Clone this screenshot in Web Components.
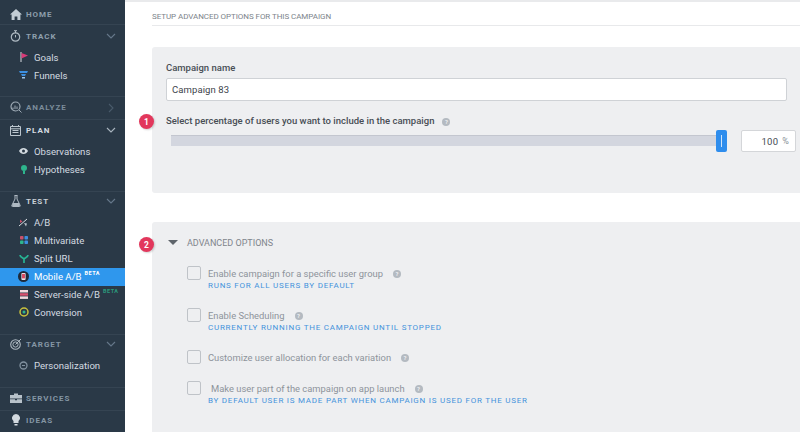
<!DOCTYPE html>
<html><head><meta charset="utf-8"><style>
html,body{margin:0;padding:0;height:432px;overflow:hidden;background:#fff;font-family:Roboto,"Liberation Sans",sans-serif}
app-shell{width:800px;height:432px}
</style></head><body>
<template id="t-shell"><style>
:host{display:flex;height:432px;overflow:hidden}
aside{width:125px;flex:none;background:#2a3947;display:flex;flex-direction:column;overflow:hidden;box-sizing:border-box;padding-top:3px}
main{flex:1;min-width:0;display:flex;flex-direction:column;padding:0 0 0 27px;border-top:2px solid #e9eaec}
</style><aside><slot name="nav"></slot></aside><main><slot></slot></main></template>

<template id="t-section"><style>
:host{display:flex;flex-direction:column;border-bottom:1px solid #354452;box-sizing:border-box;height:var(--h);flex:none}
:host([last]){border-bottom:0}
.head{display:flex;align-items:center;box-sizing:border-box;height:var(--hh,22px);padding-bottom:var(--pb,0);margin-bottom:var(--mb,0);flex:none;padding-left:9px;font-size:8px;font-weight:700;letter-spacing:.95px;color:var(--c,#8fa0ae);position:relative}
.ic{width:13px;height:13px;margin-right:4px;display:flex;align-items:center;justify-content:center;flex:none}
.chev{position:absolute;left:106px;top:calc(var(--hh,22px) / 2 - 4px - var(--pb,0px) / 2);width:12px;height:10px}
</style><div class="head"><span class="ic"><slot name="icon"></slot></span><span><slot name="title"></slot></span><span class="chev"><slot name="chev"></slot></span></div><slot></slot></template>

<template id="t-item"><style>
:host{display:flex;align-items:center;box-sizing:border-box;height:18px;padding:0 0 2px 18px;font-size:9.6px;color:#d4dbe1;white-space:nowrap;flex:none}
:host([active]){background:#2f97ed;color:#fff}
.ic{width:11px;height:12px;margin-right:5px;display:flex;align-items:center;justify-content:center;flex:none}
</style><span class="ic"><slot name="icon"></slot></span><slot></slot></template>

<template id="t-card"><style>
:host{display:block;background:#eeeff1;border-radius:3px 0 0 3px;position:relative;box-sizing:border-box;flex:none}
</style><slot></slot></template>

<template id="t-badge"><style>
:host{position:absolute;left:-13px;width:15px;height:15px;border-radius:50%;background:#e2375c;color:#fff;font-size:8.5px;font-weight:700;display:flex;align-items:center;justify-content:center;box-shadow:1px 1px 2px rgba(0,0,0,.18)}
</style><slot></slot></template>

<template id="t-help"><style>
:host{display:inline-flex;width:8px;height:8px;border-radius:50%;background:#b4bac1;color:#eeeff1;font-size:6px;font-weight:700;align-items:center;justify-content:center;line-height:1}
</style>?</template>

<template id="t-check"><style>
:host{display:block;position:relative;height:var(--rh);padding-left:56px;box-sizing:border-box;flex:none}
.box{position:absolute;left:35px;top:0;width:12px;height:12px;border:1px solid #bfc3c8;border-radius:2px;background:#eeeff1}
.row{display:flex;align-items:center;height:15px;font-size:9.4px;color:#8d939b;white-space:nowrap}
.sub{font-size:8px;letter-spacing:.76px;color:#4593dc;height:11px;line-height:11px;white-space:nowrap;margin-top:-1px}
::slotted([slot=label]){margin-right:10px}
</style><span class="box"></span><div class="row"><slot name="label"></slot><slot name="help"></slot></div><div class="sub"><slot name="sub"></slot></div></template>

<template id="t-slider"><style>
:host{display:block;position:relative;height:22px;margin-top:3px}
.track{position:absolute;left:5px;top:5px;width:546px;height:11px;background:#d3d6df;border-top:1px solid #c3c6cf;box-sizing:border-box}
.thumb{position:absolute;left:550px;top:0;width:11px;height:22px;background:#2e8ded;border-radius:2px;display:flex;justify-content:center;align-items:center}
.thumb i{width:1px;height:12px;background:#cfe4fa;display:block}
.val{position:absolute;left:575px;top:0;width:55px;height:22px;border:1px solid #d4d6d9;border-radius:2px;background:#fff;box-sizing:border-box;display:flex;align-items:center;justify-content:flex-end;padding-right:6px;font-size:9.5px;letter-spacing:.2px;color:#444b52}
.val span{color:#888f96;margin-left:4px;font-size:9px}
</style><div class="track"></div><div class="thumb"><i></i></div><div class="val">100<span>%</span></div></template>

<app-shell>
 <div slot="nav" style="display:contents">
 <nav-section style="--h:22px;--c:#8d9dab"><svg slot="icon" width="12" height="11" viewBox="0 0 12 11"><path d="M6 0 0 5.500h1.600V11h3V7.500h2.800V11h3V5.500H12z" fill="#c2ccd4"/></svg><span slot="title">HOME</span></nav-section>
 <nav-section style="--h:72px;--mb:2px"><svg slot="icon" width="11" height="12" viewBox="0 0 11 12"><circle cx="5.500" cy="7" r="4.200" fill="none" stroke="#aeb9c2" stroke-width="1.200"/><path d="M4 .7h3M5.500 1v2M5.500 5v2.400" stroke="#aeb9c2" fill="none"/></svg><span slot="title">TRACK</span><svg slot="chev" width="10" height="6" viewBox="0 0 10 6"><path d="M1 1l4 4 4-4" fill="none" stroke="#66788a" stroke-width="1.100"/></svg>
  <nav-item><svg slot="icon" width="8" height="10" viewBox="0 0 8 10"><path d="M1 0v10" stroke="#d8dde2" stroke-width="1"/><path d="M1.500 1 8 3.500 1.500 6.500z" fill="#d93a78"/></svg>Goals</nav-item>
  <nav-item><svg slot="icon" width="9" height="8" viewBox="0 0 9 8"><path d="M0 0h9L8 2H1z" fill="#3c8fe0"/><path d="M2 3h5L6 5H3z" fill="#3c8fe0"/><path d="M3 6h3v1.500H3z" fill="#9cc7ee"/></svg>Funnels</nav-item>
 </nav-section>
 <nav-section style="--h:23px;--c:#7b8c9a;--pb:2px"><svg slot="icon" width="12" height="12" viewBox="0 0 12 12"><circle cx="5.500" cy="5.500" r="4.500" fill="none" stroke="#9eabb6" stroke-width="1.200"/><path d="M3 6.500v1.500M5 4.500v3.500M7 5.500v2.500M9 9l2.500 2.500" stroke="#9eabb6"/></svg><span slot="title">ANALYZE</span><svg slot="chev" width="10" height="10" viewBox="0 0 10 10"><path d="M3 1l4 4-4 4" fill="none" stroke="#4a5b6b" stroke-width="1.100"/></svg></nav-section>
 <nav-section style="--h:72px;--c:#d5dce2;--mb:1px;--pb:2px"><svg slot="icon" width="11" height="11" viewBox="0 0 11 11"><path d="M.5 1.500h10v9H.5zM.5 3.800h10M2.500 0v2M8.500 0v2M2.500 5.500h6M2.500 7.500h6" fill="none" stroke="#bcc6ce" stroke-width="1"/></svg><span slot="title">PLAN</span><svg slot="chev" width="10" height="6" viewBox="0 0 10 6"><path d="M1 1l4 4 4-4" fill="none" stroke="#a9b5bf" stroke-width="1.100"/></svg>
  <nav-item><svg slot="icon" width="9" height="6" viewBox="0 0 9 6"><path d="M0 3c2-4 7-4 9 0-2 4-7 4-9 0z" fill="#d4dbe1"/><circle cx="4.500" cy="3" r="1.500" fill="#2a3846"/></svg>Observations</nav-item>
  <nav-item><svg slot="icon" width="6" height="9" viewBox="0 0 6 9"><circle cx="3" cy="3" r="3" fill="#2eb58d"/><path d="M2 6h2v3H2z" fill="#2eb58d"/></svg>Hypotheses</nav-item>
 </nav-section>
 <nav-section style="--h:143px;--c:#c8d0d7;--hh:20px;--mb:2px;--pb:2px"><svg slot="icon" width="10" height="12" viewBox="0 0 10 12"><path d="M3.500 .5h3M4 .5v3.500L.8 10.500c-.3.600 0 1 .6 1h7.200c.6 0 .9-.4.600-1L6 4V.5" fill="none" stroke="#aeb9c2"/><path d="M2 8h6l1 3H1z" fill="#aeb9c2"/></svg><span slot="title">TEST</span><svg slot="chev" width="10" height="6" viewBox="0 0 10 6"><path d="M1 1l4 4 4-4" fill="none" stroke="#66788a" stroke-width="1.100"/></svg>
  <nav-item><svg slot="icon" width="9" height="9" viewBox="0 0 9 9"><path d="M0 8 8 1" stroke="#d8dde2"/><path d="M1 1.500l2.500 2L1 5z" fill="#c9516b"/><path d="M5 5l3 .5-1 3z" fill="#b9c2ca"/></svg>A/B</nav-item>
  <nav-item><svg slot="icon" width="8" height="8" viewBox="0 0 8 8"><rect width="3.500" height="3.500" rx=".8" fill="#c9516b"/><rect x="4.500" width="3.500" height="3.500" rx=".8" fill="#3c8fe0"/><rect y="4.500" width="3.500" height="3.500" rx=".8" fill="#2eb58d"/><rect x="4.500" y="4.500" width="3.500" height="3.500" rx=".8" fill="#3c8fe0"/></svg>Multivariate</nav-item>
  <nav-item><svg slot="icon" width="10" height="9" viewBox="0 0 10 9"><path d="M1 1c0 2 3 3 4 4 1-1 4-2 4-4M5 5v4" fill="none" stroke="#27b393" stroke-width="1.700"/></svg>Split URL</nav-item>
  <nav-item active><svg slot="icon" width="13" height="13" viewBox="0 0 13 13"><circle cx="6.500" cy="6.500" r="6.500" fill="#1e2a3a"/><rect x="4" y="2.500" width="5" height="8" rx="1" fill="#e8e4ea"/><rect x="4.800" y="3.500" width="3.400" height="5.200" fill="#d9485f"/></svg>Mobile A/B<sup-tag style="color:#fff">BETA</sup-tag></nav-item>
  <nav-item><svg slot="icon" width="8" height="9" viewBox="0 0 8 9"><rect width="8" height="2.500" fill="#f1d9de"/><rect y="3.200" width="8" height="2.500" fill="#d9516f"/><rect y="6.400" width="8" height="2.500" fill="#f1d9de"/></svg>Server-side A/B<sup-tag style="color:#2a9a7c">BETA</sup-tag></nav-item>
  <nav-item><svg slot="icon" width="10" height="10" viewBox="0 0 10 10"><circle cx="5" cy="5" r="4" fill="none" stroke="#c9c23d" stroke-width="1.500"/><circle cx="5" cy="5" r="1.500" fill="#2eb58d"/></svg>Conversion</nav-item>
 </nav-section>
 <nav-section style="--h:53px;--c:#8496a4;--hh:20px;--mb:2px;--pb:2px"><svg slot="icon" width="12" height="12" viewBox="0 0 12 12"><circle cx="5.500" cy="6.500" r="4.800" fill="none" stroke="#aeb9c2" stroke-width="1.100"/><circle cx="5.500" cy="6.500" r="2.600" fill="none" stroke="#aeb9c2"/><path d="M5.500 6.500 11 1" stroke="#aeb9c2"/></svg><span slot="title">TARGET</span><svg slot="chev" width="10" height="6" viewBox="0 0 10 6"><path d="M1 1l4 4 4-4" fill="none" stroke="#66788a" stroke-width="1.100"/></svg>
  <nav-item><svg slot="icon" width="9" height="9" viewBox="0 0 9 9"><circle cx="4.500" cy="4.500" r="3.500" fill="none" stroke="#8292a0" stroke-width="1.300"/><path d="M3 4.500h3" stroke="#8292a0"/></svg>Personalization</nav-item>
 </nav-section>
 <nav-section style="--h:23px;--c:#8496a4;--pb:2px"><svg slot="icon" width="12" height="10" viewBox="0 0 12 10"><path d="M4 2V.5h4V2h4v3.500H0V2zM0 6.300h5v1h2v-1h5V10H0z" fill="#b8c2ca"/></svg><span slot="title">SERVICES</span></nav-section>
 <nav-section last style="--h:22px;--c:#8496a4;--pb:4px"><svg slot="icon" width="8" height="12" viewBox="0 0 8 12"><path d="M4 0a4 4 0 0 0-2.500 7.100V9h5V7.100A4 4 0 0 0 4 0zM2.500 10h3v1.500h-3z" fill="#d3dae0"/></svg><span slot="title">IDEAS</span></nav-section>
 </div>

 <page-header>SETUP ADVANCED OPTIONS FOR THIS CAMPAIGN</page-header>
 <opt-card style="height:146px;margin-top:21px;padding:14px 0 0 14px">
  <step-badge style="top:67px">1</step-badge>
  <field-label>Campaign name</field-label>
  <text-box>Campaign 83</text-box>
  <field-label style="margin-top:13px">Select percentage of users you want to include in the campaign<help-dot style="margin-left:8px"></help-dot></field-label>
  <range-slider></range-slider>
 </opt-card>
 <opt-card style="height:212px;margin-top:29px;padding-top:14px;display:flex;flex-direction:column">
  <step-badge style="top:15px">2</step-badge>
  <adv-head>ADVANCED OPTIONS</adv-head>
  <check-row style="--rh:42px;margin-top:17px"><span slot="label">Enable campaign for a specific user group</span><help-dot slot="help"></help-dot><span slot="sub">RUNS FOR ALL USERS BY DEFAULT</span></check-row>
  <check-row style="--rh:42px"><span slot="label">Enable Scheduling</span><help-dot slot="help"></help-dot><span slot="sub">CURRENTLY RUNNING THE CAMPAIGN UNTIL STOPPED</span></check-row>
  <check-row style="--rh:31px"><span slot="label">Customize user allocation for each variation</span><help-dot slot="help"></help-dot></check-row>
  <check-row style="--rh:40px"><span slot="label" style="margin-left:3px">Make user part of the campaign on app launch</span><help-dot slot="help"></help-dot><span slot="sub">BY DEFAULT USER IS MADE PART WHEN CAMPAIGN IS USED FOR THE USER</span></check-row>
 </opt-card>
</app-shell>
<script>
function simple(name,css,html){customElements.define(name,class extends HTMLElement{constructor(){super();this.attachShadow({mode:'open'}).innerHTML='<style>'+css+'</style>'+html}})}
function tpl(name,id){customElements.define(name,class extends HTMLElement{constructor(){super();this.attachShadow({mode:'open'}).appendChild(document.getElementById(id).content.cloneNode(true))}})}
tpl('app-shell','t-shell');tpl('nav-section','t-section');tpl('nav-item','t-item');tpl('opt-card','t-card');tpl('step-badge','t-badge');tpl('help-dot','t-help');tpl('check-row','t-check');tpl('range-slider','t-slider');
simple('sup-tag',':host{font-size:5.5px;font-weight:700;letter-spacing:.5px;margin-left:3px;position:relative;top:-3px}','<slot></slot>');
simple('page-header',':host{display:block;height:24px;line-height:29px;box-sizing:border-box;font-size:8px;letter-spacing:-.06px;color:#7d848b;border-bottom:1px solid #e8e9eb;flex:none}','<slot></slot>');
simple('field-label',':host{display:block;font-size:9.5px;font-weight:500;color:#484e55;height:13px;line-height:13px;white-space:nowrap}','<slot></slot>');
simple('text-box',':host{display:flex;align-items:center;box-sizing:border-box;width:621px;height:23px;margin-top:4px;background:#fff;border:1px solid #cfd2d6;border-radius:2px;padding-left:5px;font-size:9.5px;letter-spacing:.1px;color:#3d444b}','<slot></slot>');
simple('adv-head',':host{display:flex;align-items:center;height:13px;font-size:9px;color:#7f858c;padding-left:17px;position:relative;flex:none}:host::before{content:"";position:absolute;left:16px;top:4px;border:5px solid transparent;border-top:5px solid #5e646b;border-bottom:0}span{margin-left:18px}','<span><slot></slot></span>');
</script>
</body></html>
